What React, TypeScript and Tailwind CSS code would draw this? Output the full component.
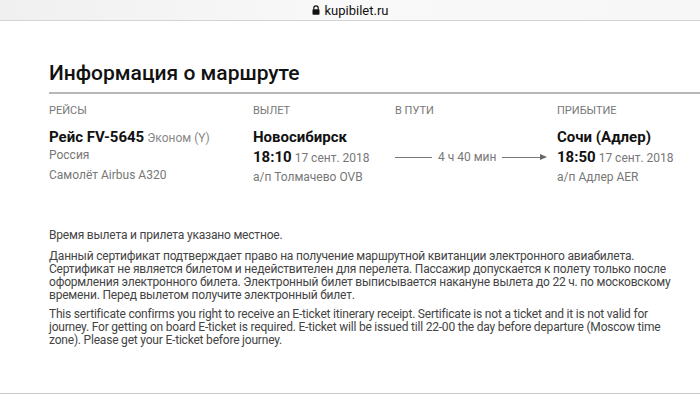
import React from "react";

export default function App() {
  const font = { fontFamily: '"Roboto", "Liberation Sans", sans-serif' };
  return (
    <div className="w-[700px] h-[394px] bg-white overflow-hidden flex flex-col" style={font}>
      <div className="h-[21px] shrink-0 bg-gradient-to-r from-[#f0f0f0] via-[#f9f9f9] to-[#f7f7f7] border-b border-[#d4d4d4] flex items-center justify-center gap-[5px]">
        <svg width="8" height="10" viewBox="0 0 8 10">
          <path d="M1.8 4.5V3a2.2 2.2 0 0 1 4.4 0v1.5" fill="none" stroke="#111" strokeWidth="1.2" />
          <rect x="0.5" y="4.3" width="7" height="5.4" rx="0.8" fill="#111" />
        </svg>
        <span className="text-[13px] text-[#111] leading-none">kupibilet.ru</span>
      </div>
      <div className="flex-1 flex flex-col pl-[49px]">
        <h1 className="mt-[39px] text-[21px] leading-[26px] font-medium text-[#111]">Информация о маршруте</h1>
        <div className="mt-[6px] h-[2px] bg-[#b8b8b8]" />
        <div className="mt-[10px] grid grid-cols-[204px_142px_162px_1fr] text-[#777]">
          <div className="text-[11px] leading-[14px] uppercase">Рейсы</div>
          <div className="text-[11px] leading-[14px] uppercase">Вылет</div>
          <div className="text-[11px] leading-[14px] uppercase">В пути</div>
          <div className="text-[11px] leading-[14px] uppercase">Прибытие</div>

          <div className="mt-[9px] flex flex-col">
            <div className="leading-[20px]">
              <span className="text-[15px] font-bold text-[#111]">Рейс FV-5645</span>
              <span className="text-[12px] text-[#888]"> Эконом (Y)</span>
            </div>
            <div className="text-[12px] leading-[14px]">Россия</div>
            <div className="mt-[5px] text-[12px] leading-[16px]">Самолёт Airbus A320</div>
          </div>
          <div className="mt-[9px] flex flex-col">
            <div className="text-[15px] font-bold text-[#111] leading-[20px]">Новосибирск</div>
            <div className="leading-[20px]">
              <span className="text-[15px] font-bold text-[#111]">18:10</span>
              <span className="text-[12px] text-[#777]"> 17 сент. 2018</span>
            </div>
            <div className="mt-[1px] text-[12px] leading-[16px]">а/п Толмачево OVB</div>
          </div>
          <div className="mt-[29px] flex items-center h-[20px] pr-[10px]">
            <div className="w-[37px] h-px bg-[#777]" />
            <span className="mx-[6px] text-[12px] text-[#777]">4 ч 40 мин</span>
            <div className="flex-1 h-px bg-[#777]" />
            <svg width="7" height="6" viewBox="0 0 7 6" className="-ml-px">
              <path d="M0 0L7 3L0 6Z" fill="#666" />
            </svg>
          </div>
          <div className="mt-[9px] flex flex-col">
            <div className="text-[15px] font-bold text-[#111] leading-[20px]">Сочи (Адлер)</div>
            <div className="leading-[20px]">
              <span className="text-[15px] font-bold text-[#111]">18:50</span>
              <span className="text-[12px] text-[#777]"> 17 сент. 2018</span>
            </div>
            <div className="mt-[1px] text-[12px] leading-[16px]">а/п Адлер AER</div>
          </div>
        </div>
        <div className="mt-[44px] text-[12px] leading-[13px] text-[#444] whitespace-nowrap tracking-[-0.2px]">
          <p>Время вылета и прилета указано местное.</p>
          <p className="mt-[8px]">
            Данный сертификат подтверждает право на получение маршрутной квитанции электронного авиабилета.
            <br />
            Сертификат не является билетом и недействителен для перелета. Пассажир допускается к полету только после
            <br />
            оформления электронного билета. Электронный билет выписывается накануне вылета до 22 ч. по московскому
            <br />
            времени. Перед вылетом получите электронный билет.
          </p>
          <p className="mt-[6px]">
            This sertificate confirms you right to receive an E-ticket itinerary receipt. Sertificate is not a ticket and it is not valid for
            <br />
            journey. For getting on board E-ticket is required. E-ticket will be issued till 22-00 the day before departure (Moscow time
            <br />
            zone). Please get your E-ticket before journey.
          </p>
        </div>
      </div>
      <div className="h-px shrink-0 bg-[#c8c8c8]" />
    </div>
  );
}
